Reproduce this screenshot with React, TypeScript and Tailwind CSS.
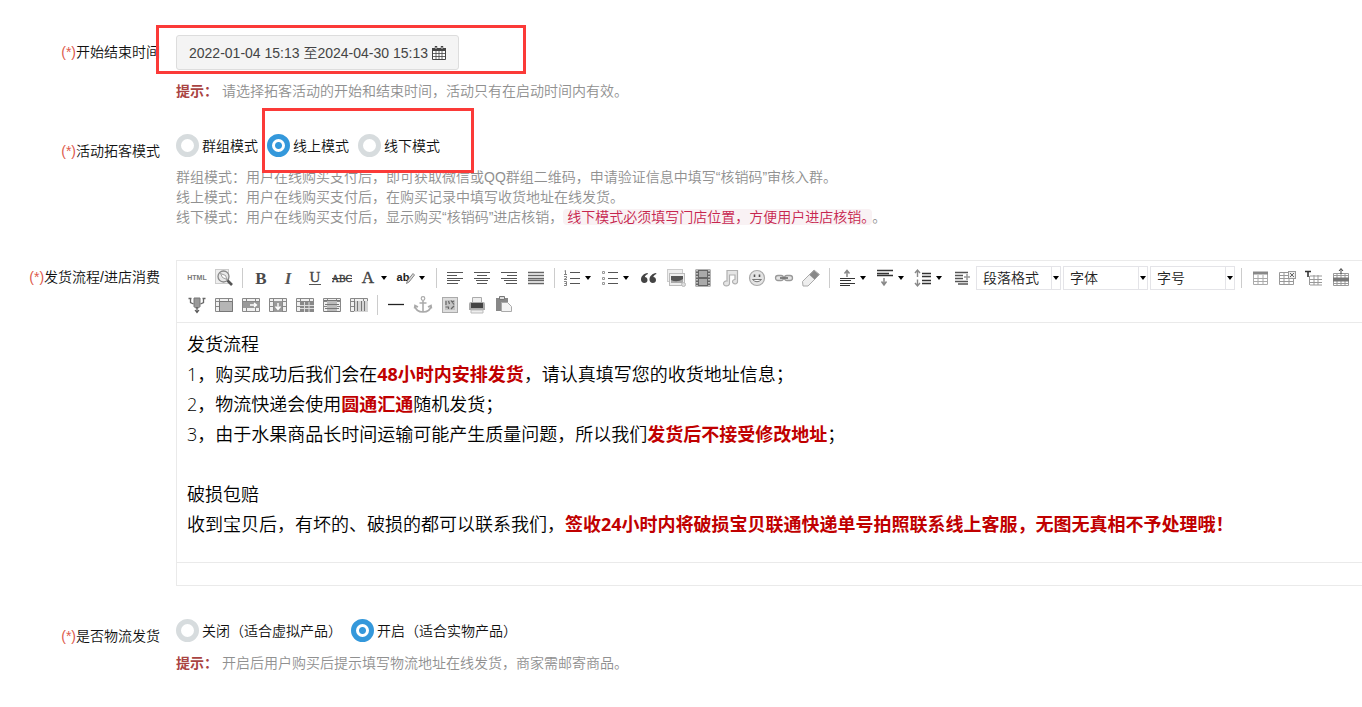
import React, { useState } from 'react';

const SANS = "font-['Liberation_Sans','Noto_Sans_CJK_SC',sans-serif]";

// 工具列圖示，統一使用 20x20 畫布
const ICONS: Record<string, React.ReactNode> = {
  html: (
    <text x="10" y="12" fontSize="7" fontWeight="700" textAnchor="middle" fill="#777" fontFamily="Liberation Sans">HTML</text>
  ),
  preview: (
    <>
      <rect x="1.5" y="1.5" width="13" height="14" fill="#eee" stroke="#ccc" />
      <circle cx="9.5" cy="8.5" r="5.5" fill="#e8e8e8" stroke="#888" strokeWidth="1.3" />
      <path d="M6.5 5.5l5 2 1.5 4-4.5-2z" fill="#fff" stroke="#888" strokeWidth=".8" />
      <path d="M13.5 12.5l4.5 4.5" stroke="#555" strokeWidth="2.6" />
    </>
  ),
  bold: <text x="10" y="15.5" fontSize="17" fontWeight="700" textAnchor="middle" fill="#4a4a4a" fontFamily="Liberation Serif">B</text>,
  italic: <text x="10" y="15.5" fontSize="17" fontWeight="700" fontStyle="italic" textAnchor="middle" fill="#555" fontFamily="Liberation Serif">I</text>,
  underline: (
    <>
      <text x="10" y="14" fontSize="15" textAnchor="middle" fill="#444" stroke="#444" strokeWidth=".3" fontFamily="Liberation Serif">U</text>
      <path d="M4 16.5h12" stroke="#555" />
    </>
  ),
  strike: (
    <>
      <text x="10" y="14" fontSize="10" textAnchor="middle" fill="#333" stroke="#333" strokeWidth=".3" fontFamily="Liberation Serif">ABC</text>
      <path d="M0 10.5h20" stroke="#444" />
    </>
  ),
  forecolor: <text x="10" y="14.5" fontSize="17" textAnchor="middle" fill="#444" stroke="#444" strokeWidth=".4" fontFamily="Liberation Serif">A</text>,
  backcolor: (
    <>
      <text x="7" y="13" fontSize="11" fontWeight="700" textAnchor="middle" fill="#222" fontFamily="Liberation Sans">ab</text>
      <path d="M10.5 15.5l1-3L17 5.5l1.5 1.5-5.5 7z" fill="#ddd" stroke="#777" strokeWidth=".9" />
    </>
  ),
  left: <path d="M2 4.5h16M2 7.5h10M2 10.5h16M2 12.5h13M2 15.5h11" stroke="#555" strokeWidth="1.2" />,
  center: <path d="M2 4.5h16M5 7.5h10M2 10.5h16M4 12.5h12M5 15.5h10" stroke="#555" strokeWidth="1.2" />,
  right: <path d="M2 4.5h16M8 7.5h10M2 10.5h16M5 12.5h13M7 15.5h11" stroke="#555" strokeWidth="1.2" />,
  justify: <path d="M2 4.5h16M2 7.5h16M2 10.5h16M2 12.5h16M2 15.5h16" stroke="#666" strokeWidth="1.3" />,
  ol: (
    <>
      <path d="M8 4.5h10M8 10.5h10M8 15.5h10" stroke="#555" strokeWidth="1.2" />
      <path d="M2.5 3l1-.5v4M2 6.5h3M2 8.5h2.5v1.5L2 11.5h3M2 13.5h2.5v4H2M2.5 15.5h2" stroke="#777" strokeWidth=".9" fill="none" />
    </>
  ),
  ul: (
    <>
      <path d="M8 4.5h10M8 10.5h10M8 15.5h10" stroke="#555" strokeWidth="1.2" />
      <path d="M2.5 3.5h2v2h-2zM2.5 9.5h2v2h-2zM2.5 14.5h2v2h-2z" stroke="#999" fill="none" />
    </>
  ),
  quote: (
    <path
      d="M8.5 5C5 5.5 2 8 2 11.5c0 2.2 1.4 3.5 3.3 3.5s3.2-1.2 3.2-3-1.2-2.9-2.7-2.9C6.2 7.5 7.3 6.5 9 6zM17 5c-3.5.5-6.5 3-6.5 6.5 0 2.2 1.4 3.5 3.3 3.5s3.2-1.2 3.2-3-1.2-2.9-2.7-2.9c.4-1.6 1.5-2.6 3.2-3.1z"
      fill="#444"
    />
  ),
  image: (
    <>
      <rect x="1.5" y="1.5" width="15" height="12" fill="#eee" stroke="#ccc" />
      <rect x="3.5" y="5.5" width="15" height="12" fill="#eee" stroke="#bbb" />
      <path d="M5 8h12v7H5z" fill="#aaa" />
      <path d="M5 8h12v3q-6 4-12 1z" fill="#555" />
      <circle cx="17.5" cy="16.5" r="2" fill="#ddd" stroke="#bbb" />
    </>
  ),
  video: (
    <>
      <path d="M2.5 1.5h15v17h-15z" fill="#666" />
      <path d="M6 3h8v6H6zM6 11h8v6H6z" fill="#aaa" />
      <path d="M4 2v16M16 2v16" stroke="#ddd" strokeWidth="1.5" strokeDasharray="1.5 1.5" />
    </>
  ),
  music: (
    <path d="M7 2.5h10.5v11a2.5 2.2 0 1 1-2.5-2V7H9.500v8.5a3 2.5 0 1 1-2.5-2.5z" fill="#e5e5e5" stroke="#b0b0b0" strokeWidth="1.2" />
  ),
  smile: (
    <>
      <circle cx="10" cy="10" r="7.5" fill="#e4e4e4" stroke="#aaa" strokeWidth="1.2" />
      <path d="M7.5 6.5v2.5M12.5 6.5v2.5" stroke="#555" strokeWidth="1.6" />
      <path d="M5.5 11.5q4.5 4.5 9 0z" fill="#fff" stroke="#777" />
    </>
  ),
  link: (
    <>
      <rect x="1.5" y="7.5" width="8" height="5" rx="2.5" fill="#e5e5e5" stroke="#999" strokeWidth="1.3" />
      <rect x="10.5" y="7.5" width="8" height="5" rx="2.5" fill="#e5e5e5" stroke="#999" strokeWidth="1.3" />
      <path d="M6 10h8" stroke="#777" strokeWidth="1.8" />
    </>
  ),
  eraser: (
    <>
      <path d="M1.5 13.5L13 2l5.5 4.5L7 18H2z" fill="#eee" stroke="#aaa" />
      <path d="M8.5 7L13 2.5l5 4-4.5 5z" fill="#888" />
    </>
  ),
  before: (
    <>
      <path d="M10 9V3M7.5 5.5L10 2.5l2.5 3" stroke="#888" strokeWidth="1.5" fill="none" />
      <path d="M3 10.5h15M3 12.5h11M3 15.5h15M3 17.5h10" stroke="#333" strokeWidth="1.2" />
    </>
  ),
  after: (
    <>
      <path d="M2 2.5h16M2 5.5h12M2 7.5h16" stroke="#333" strokeWidth="1.3" />
      <path d="M9 10v7M6.5 13.5L9 17l2.5-3.5" stroke="#888" strokeWidth="1.5" fill="none" />
    </>
  ),
  lineheight: (
    <>
      <path d="M9 5.5h9M9 8.5h9M9 12.5h9M9 15.5h9" stroke="#333" strokeWidth="1.3" />
      <path d="M4.5 9V2.500M2 5l2.5-3L7 5M4.5 11.5V18M2 15l2.5 3L7 15" stroke="#888" strokeWidth="1.4" fill="none" />
    </>
  ),
  indent: (
    <>
      <path d="M3 4.5h13M3 7.5h8M3 10.5h8M3 13.5h13M6 16h10" stroke="#555" strokeWidth="1.5" />
      <path d="M12 9h6M15 6v6" stroke="#999" strokeWidth="1.5" />
    </>
  ),
  table: (
    <>
      <path d="M3.5 4.5h14v12h-14zM8 7v10M13 7v10M3 10.5h14M3 13.5h14" fill="none" stroke="#aaa" />
      <path d="M3 3.5h15v3H3z" fill="#888" />
    </>
  ),
  deltable: (
    <>
      <path d="M2.5 4.5h14v12h-14zM7 4v13M12 4v13M2 10.5h15M2 7.5h14M2 13.5h14" fill="none" stroke="#999" />
      <rect x="11.5" y="3.5" width="7" height="7" fill="#eee" stroke="#999" />
      <path d="M13 5l4 4M17 5l-4 4" stroke="#666" />
    </>
  ),
  title: (
    <>
      <path d="M1 3.5h6M4 3v6" stroke="#333" strokeWidth="1.6" />
      <path d="M5.5 8v9M6 8h12M6 11.5h12M6 14.5h12M6 17h12M10 7v10M14 7v10" stroke="#999" fill="none" />
    </>
  ),
  insrow: (
    <>
      <path d="M2.5 5.5h15v12h-15zM6 5v12M10 5v12M14 5v12M2 7.5h15M2 15.5h15" fill="none" stroke="#999" />
      <path d="M2 9.5h16v4H2z" fill="#777" />
      <path d="M10 6V1M8 3l2-2.5L12 3" stroke="#444" fill="none" />
    </>
  ),
  inscol: (
    <>
      <path d="M7 3h6v8.5l-1.5 1.5h-3L7 11.5z" fill="#999" stroke="#777" />
      <path d="M3.5 3v4.5l3 1.5M16.5 3v4.5l-3 1.5M1.5 3.5h3M15.5 3.5h3" stroke="#666" strokeWidth="1.3" fill="none" />
      <path d="M10 12v5M8 15l2 2.5 2-2.5" stroke="#555" strokeWidth="1.2" fill="none" />
    </>
  ),
  mergecells: <path d="M5.5 6.5h13v10h-13z" fill="#b5b5b5" stroke="#777" />,
  mergeright: (
    <>
      <path d="M2 7h17v6H2z" fill="#999" />
      <path d="M9 10h6M13 8l2.5 2-2.5 2" stroke="#fff" strokeWidth="1.3" fill="none" />
    </>
  ),
  mergedown: (
    <>
      <path d="M6 6h8v11H6z" fill="#999" />
      <path d="M10 8v6M7.5 11.5l2.5 3 2.5-3" stroke="#fff" strokeWidth="1.4" fill="none" />
    </>
  ),
  split: (
    <>
      <path d="M5 7h14v10H5z" fill="#888" />
      <path d="M5 10.5h14M5 13.5h14M9.5 7v10M14 7v10" stroke="#ddd" />
    </>
  ),
  splitrow: (
    <>
      <path d="M5 5h10v12H5z" fill="#bbb" />
      <path d="M2 5.5h16M3 9.5h14M3 13.5h14M2 16.5h16" stroke="#777" />
    </>
  ),
  splitcol: (
    <>
      <path d="M5 6h14v11H5z" fill="#d5d5d5" />
      <path d="M5.5 6v10M8.5 6v10M12.5 6v10M15.5 6v10" stroke="#777" />
    </>
  ),
  hr: <path d="M2 9.5h16" stroke="#222" strokeWidth="1.3" />,
  anchor: (
    <>
      <circle cx="10" cy="3.5" r="1.8" fill="#fff" stroke="#aaa" strokeWidth="1.2" />
      <path d="M10 5.5V17M6.5 8h7M2 11q1 6 8 6t8-6M1.5 13.5L2 10.5l3 1.5M18.5 13.5L18 10.5l-3 1.5" stroke="#aaa" strokeWidth="1.6" fill="none" />
    </>
  ),
  map: (
    <>
      <rect x="2.5" y="2.5" width="15" height="15" fill="#ddd" stroke="#aaa" />
      <path d="M5 5h10v10H5z" fill="#c4c4c4" />
      <path d="M6 6v4M8.5 6l1 3M5.5 12h3v2M11 5.5l3 4M11 14l3-3M12 7l2-1" stroke="#666" strokeWidth="1.2" fill="none" />
    </>
  ),
  print: (
    <>
      <path d="M5.5 2.5h9v6h-9z" fill="#eee" stroke="#aaa" />
      <path d="M2 9q0-2 2-2h12q2 0 2 2v6H2z" fill="#aaa" />
      <path d="M4 8h12v5H4z" fill="#444" />
      <path d="M4 15h12v3H4z" fill="#eee" stroke="#bbb" />
    </>
  ),
  paste: (
    <>
      <path d="M2 3h12v13H2z" fill="#888" />
      <path d="M5.5 1.5h5v3h-5z" fill="#ddd" stroke="#777" />
      <path d="M7.5 7.5h6l4 4v5h-10z" fill="#f4f4f4" stroke="#aaa" />
    </>
  ),
};

const GRID_BACK = ['mergecells', 'mergeright', 'mergedown', 'split', 'splitrow', 'splitcol'];

type Tool = { id: string; label: string; menu?: boolean };

const TOOLS: (Tool | '|')[] = [
  { id: 'html', label: '源代码' },
  { id: 'preview', label: '预览' },
  '|',
  { id: 'bold', label: '加粗' },
  { id: 'italic', label: '斜体' },
  { id: 'underline', label: '下划线' },
  { id: 'strike', label: '删除线' },
  { id: 'forecolor', label: '字体颜色', menu: true },
  { id: 'backcolor', label: '背景色', menu: true },
  '|',
  { id: 'left', label: '居左对齐' },
  { id: 'center', label: '居中对齐' },
  { id: 'right', label: '居右对齐' },
  { id: 'justify', label: '两端对齐' },
  '|',
  { id: 'ol', label: '有序列表', menu: true },
  { id: 'ul', label: '无序列表', menu: true },
  { id: 'quote', label: '引用' },
  { id: 'image', label: '图片' },
  { id: 'video', label: '视频' },
  { id: 'music', label: '音乐' },
  { id: 'smile', label: '表情' },
  { id: 'link', label: '超链接' },
  { id: 'eraser', label: '清除格式' },
  '|',
  { id: 'before', label: '段前距', menu: true },
  { id: 'after', label: '段后距', menu: true },
  { id: 'lineheight', label: '行间距', menu: true },
  { id: 'indent', label: '首行缩进' },
];

const TABLE_TOOLS: (Tool | '|')[] = [
  '|',
  { id: 'table', label: '插入表格' },
  { id: 'deltable', label: '删除表格' },
  { id: 'title', label: '表格前插入行' },
  { id: 'insrow', label: '前插入行' },
  { id: 'inscol', label: '前插入列' },
  { id: 'mergecells', label: '合并多个单元格' },
  { id: 'mergeright', label: '右合并单元格' },
  { id: 'mergedown', label: '下合并单元格' },
  { id: 'split', label: '完全拆分单元格' },
  { id: 'splitrow', label: '拆分成行' },
  { id: 'splitcol', label: '拆分成列' },
  '|',
  { id: 'hr', label: '分隔线' },
  { id: 'anchor', label: '锚点' },
  { id: 'map', label: '百度地图' },
  { id: 'print', label: '打印' },
  { id: 'paste', label: '粘贴' },
];

const Caret = () => (
  <svg className="w-[6px] h-[4px]" viewBox="0 0 6 4"><path d="M0 0h6L3 4z" fill="#000" /></svg>
);

const ToolItem: React.FC<{ item: Tool | '|' }> = ({ item }) => {
  if (item === '|') {
    return <span className="w-[10px] h-[27px] flex items-center justify-center"><i className="w-px h-5 bg-[#ccc]" /></span>;
  }
  return (
    <button type="button" aria-label={item.label} className={`h-[27px] flex items-center ${item.menu ? 'w-[38px] gap-[3px] pl-[3px]' : 'w-[27px] justify-center'}`}>
      <svg className="w-5 h-5 shrink-0" viewBox="0 0 20 20">
        {GRID_BACK.includes(item.id) && (
          <path d="M1.5 3.5h17v13h-17zM1 6.5h18M1 11.5h4M15 11.5h4M5.5 3v13M14.5 3v13" stroke="#888" fill="#f0f0f0" />
        )}
        {ICONS[item.id]}
      </svg>
      {item.menu && <Caret />}
    </button>
  );
};

const Combo: React.FC<{ label: string }> = ({ label }) => (
  <span className="relative w-[85px] h-6 mx-px">
    <select aria-label={label} className="appearance-none w-full h-full pl-[6px] bg-white border border-[#e4e4e8] text-sm leading-5 text-[#222] outline-none">
      <option>{label}</option>
    </select>
    <span className="absolute right-px top-px bottom-px w-[9px] border-l border-[#e4e4e8] flex items-center justify-center pointer-events-none">
      <Caret />
    </span>
  </span>
);

const Row: React.FC<{ label: string; children: React.ReactNode }> = ({ label, children }) => (
  <div className="flex">
    <div className="w-40 shrink-0 pt-[7px] text-right whitespace-nowrap"><span className="text-[#dd5a4c]">(*)</span>{label}</div>
    <div className="relative flex-1 min-w-0 ml-4">{children}</div>
  </div>
);

const Radio: React.FC<{ name: string; label: string; checked: boolean; onChange: () => void }> = ({ name, label, checked, onChange }) => (
  <label className="flex items-center gap-[3px] cursor-pointer">
    <input
      type="radio"
      name={name}
      checked={checked}
      onChange={onChange}
      className="appearance-none w-[23px] h-[23px] rounded-full border-[5px] border-[#d7dcde] checked:border-[#3498db] checked:bg-[radial-gradient(circle,#3498db_3px,#fff_4px)] bg-no-repeat"
    />
    {label}
  </label>
);

const Tip: React.FC<{ children: React.ReactNode }> = ({ children }) => (
  <p className="mt-[11px] text-[#909090]"><b className="font-bold text-[#a94442]">提示：</b> {children}</p>
);

const Red: React.FC<{ children: React.ReactNode }> = ({ children }) => <b className="font-bold text-[#c00000]">{children}</b>;

export default function App() {
  const [mode, setMode] = useState('线上模式');
  const [shipping, setShipping] = useState('开启（适合实物产品）');

  return (
    <form className={`${SANS} flex flex-col gap-[33px] pt-[35px] pb-8 bg-white text-sm leading-5 font-[350] text-[#111] overflow-hidden`}>
      <Row label="开始结束时间">
        <button type="button" className="h-[35px] px-3 flex items-center gap-1 bg-[#f4f4f4] border border-[#ddd] rounded-[3px] text-[#444]">
          2022-01-04 15:13 至2024-04-30 15:13
          <svg className="w-[14px] h-[14px]" viewBox="0 0 14 14">
            <path d="M.5 2.5h13v11H.5z" fill="#fff" stroke="#444" />
            <path d="M0 2h14v3H0z" fill="#444" />
            <path d="M4 5v9M7 5v9M10 5v9M0 7.5h14M0 10.5h14" stroke="#444" strokeWidth=".8" />
            <path d="M4 .5v3M10 .5v3" stroke="#444" strokeWidth="2.4" strokeLinecap="round" />
            <path d="M4 1v2M10 1v2" stroke="#fff" strokeWidth=".8" />
          </svg>
        </button>
        <Tip>请选择拓客活动的开始和结束时间，活动只有在启动时间内有效。</Tip>
        <div className="absolute -left-5 -top-[10px] w-[370px] h-[49px] border-[3px] border-[#fb3a38] pointer-events-none" />
      </Row>

      <Row label="活动拓客模式">
        <div className="flex gap-[9px]">
          {['群组模式', '线上模式', '线下模式'].map(m => (
            <Radio key={m} name="mode" label={m} checked={mode === m} onChange={() => setMode(m)} />
          ))}
        </div>
        <div className="mt-[10px] text-[#909090]">
          <p>群组模式：用户在线购买支付后，即可获取微信或QQ群组二维码，申请验证信息中填写“核销码”审核入群。</p>
          <p>线上模式：用户在线购买支付后，在购买记录中填写收货地址在线发货。</p>
          <p>线下模式：用户在线购买支付后，显示购买“核销码”进店核销，<code className={`${SANS} px-1 bg-[#f9f2f4] rounded text-[#c7254e]`}>线下模式必须填写门店位置，方便用户进店核销。</code>。</p>
        </div>
        <div className="absolute left-[86px] top-[-26px] w-[212px] h-[65px] border-[3px] border-[#fb3a38] pointer-events-none" />
      </Row>

      <Row label="发货流程/进店消费">
        <div className="border border-r-0 border-[#eaeaea]">
          <div className="flex flex-wrap items-center pl-[6px] pt-[3px] pb-1 border-b border-[#eaeaea]">
            {TOOLS.map((t, i) => <ToolItem key={i} item={t} />)}
            {['段落格式', '字体', '字号'].map(c => <Combo key={c} label={c} />)}
            {TABLE_TOOLS.map((t, i) => <ToolItem key={i} item={t} />)}
          </div>
          <div
            role="textbox"
            aria-label="发货流程/进店消费"
            contentEditable
            suppressContentEditableWarning
            className="min-h-[239px] px-[10px] pt-[6px] font-['Open_Sans','Noto_Sans_CJK_SC',sans-serif] text-lg leading-[30px] text-black outline-none"
          >
            <p>发货流程</p>
            <p>1，购买成功后我们会在<Red>48小时内安排发货</Red>，请认真填写您的收货地址信息；</p>
            <p>2，物流快递会使用<Red>圆通汇通</Red>随机发货；</p>
            <p>3，由于水果商品长时间运输可能产生质量问题，所以我们<Red>发货后不接受修改地址</Red>；</p>
            <p><br /></p>
            <p>破损包赔</p>
            <p>收到宝贝后，有坏的、破损的都可以联系我们，<Red>签收24小时内将破损宝贝联通快递单号拍照联系线上客服，无图无真相不予处理哦！</Red></p>
          </div>
          <div className="h-[23px] border-t border-[#eaeaea]" />
        </div>
      </Row>

      <Row label="是否物流发货">
        <div className="flex gap-[9px]">
          {['关闭（适合虚拟产品）', '开启（适合实物产品）'].map(s => (
            <Radio key={s} name="shipping" label={s} checked={shipping === s} onChange={() => setShipping(s)} />
          ))}
        </div>
        <Tip>开启后用户购买后提示填写物流地址在线发货，商家需邮寄商品。</Tip>
      </Row>
    </form>
  );
}
